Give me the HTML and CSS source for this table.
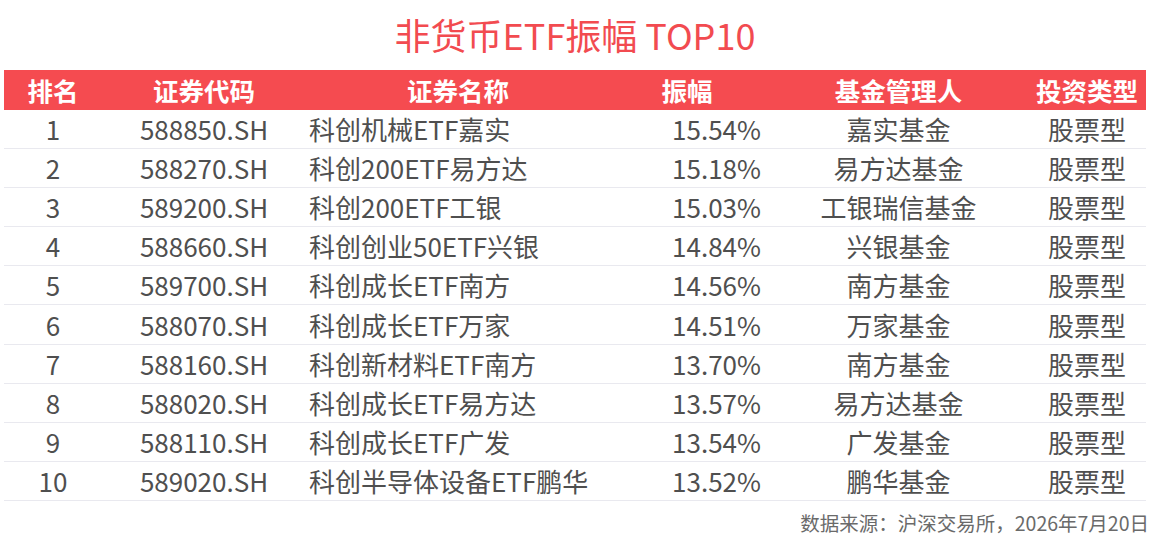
FILE: index.html
```html
<!DOCTYPE html>
<html lang="zh-CN">
<head>
<meta charset="utf-8">
<title>非货币ETF振幅 TOP10</title>
<link rel="stylesheet" href="styles.css">
</head>
<body>
<div class="page">
  <h1 class="title">非货币ETF振幅 TOP10</h1>
  <div class="table">
    <div class="row head">
      <div class="c rank">排名</div>
      <div class="c code">证券代码</div>
      <div class="c name">证券名称</div>
      <div class="c amp">振幅</div>
      <div class="c mgr">基金管理人</div>
      <div class="c type">投资类型</div>
    </div>
    <div class="row"><div class="c rank">1</div><div class="c code">588850.SH</div><div class="c name">科创机械ETF嘉实</div><div class="c amp">15.54%</div><div class="c mgr">嘉实基金</div><div class="c type">股票型</div></div>
    <div class="row"><div class="c rank">2</div><div class="c code">588270.SH</div><div class="c name">科创200ETF易方达</div><div class="c amp">15.18%</div><div class="c mgr">易方达基金</div><div class="c type">股票型</div></div>
    <div class="row"><div class="c rank">3</div><div class="c code">589200.SH</div><div class="c name">科创200ETF工银</div><div class="c amp">15.03%</div><div class="c mgr">工银瑞信基金</div><div class="c type">股票型</div></div>
    <div class="row"><div class="c rank">4</div><div class="c code">588660.SH</div><div class="c name">科创创业50ETF兴银</div><div class="c amp">14.84%</div><div class="c mgr">兴银基金</div><div class="c type">股票型</div></div>
    <div class="row"><div class="c rank">5</div><div class="c code">589700.SH</div><div class="c name">科创成长ETF南方</div><div class="c amp">14.56%</div><div class="c mgr">南方基金</div><div class="c type">股票型</div></div>
    <div class="row"><div class="c rank">6</div><div class="c code">588070.SH</div><div class="c name">科创成长ETF万家</div><div class="c amp">14.51%</div><div class="c mgr">万家基金</div><div class="c type">股票型</div></div>
    <div class="row"><div class="c rank">7</div><div class="c code">588160.SH</div><div class="c name">科创新材料ETF南方</div><div class="c amp">13.70%</div><div class="c mgr">南方基金</div><div class="c type">股票型</div></div>
    <div class="row"><div class="c rank">8</div><div class="c code">588020.SH</div><div class="c name">科创成长ETF易方达</div><div class="c amp">13.57%</div><div class="c mgr">易方达基金</div><div class="c type">股票型</div></div>
    <div class="row"><div class="c rank">9</div><div class="c code">588110.SH</div><div class="c name">科创成长ETF广发</div><div class="c amp">13.54%</div><div class="c mgr">广发基金</div><div class="c type">股票型</div></div>
    <div class="row"><div class="c rank">10</div><div class="c code">589020.SH</div><div class="c name">科创半导体设备ETF鹏华</div><div class="c amp">13.52%</div><div class="c mgr">鹏华基金</div><div class="c type">股票型</div></div>
  </div>
  <div class="source">数据来源：沪深交易所，2026年7月20日</div>
</div>
</body>
</html>
```

FILE: styles.css
```css
html, body {
  margin: 0;
  padding: 0;
  background: #ffffff;
}

body {
  font-family: "Noto Sans CJK SC", "Noto Sans", sans-serif;
  color: #4f4f4f;
}

.page {
  width: 1150px;
  height: 540px;
  overflow: hidden;
}

.title {
  margin: 0;
  height: 70px;
  line-height: 68px;
  text-align: center;
  font-size: 36px;
  font-weight: 400;
  color: #f24b50;
}

.table {
  margin-left: 4px;
  width: 1142px;
  display: flex;
  flex-direction: column;
}

.row {
  display: grid;
  grid-template-columns: 98px 204px 299px 164px 259px 118px;
  align-items: center;
  height: 39.1px;
  box-sizing: border-box;
  border-bottom: 1px solid #e9e9ef;
  font-size: 26px;
  line-height: 1;
}

.row.head {
  height: 40px;
  background: #f54b50;
  color: #ffffff;
  font-weight: 700;
  font-size: 25.5px;
  border-bottom: none;
}

.c {
  text-align: center;
  white-space: nowrap;
}

.name {
  text-align: left;
  padding-left: 3px;
}

.amp {
  text-align: right;
  padding-right: 8px;
}

.head .name {
  text-align: center;
  padding: 0 0 0 5px;
}

.head .amp {
  text-align: center;
  padding: 0;
}

.source {
  margin-top: 7px;
  padding-right: 1px;
  text-align: right;
  font-size: 19.5px;
  color: #6a6a6a;
}
```
